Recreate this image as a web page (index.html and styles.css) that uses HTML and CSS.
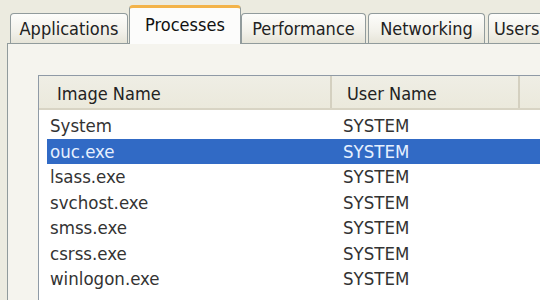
FILE: index.html
```html
<!DOCTYPE html>
<html lang="en">
  <head>
    <meta charset="UTF-8" />
    <title>Windows Task Manager</title>
    <link rel="stylesheet" href="styles.css">
  </head>
  <body>
    <div class="tabs">
      <div class="tab tab-apps">Applications</div>
      <div class="tab tab-proc active">Processes</div>
      <div class="tab tab-perf">Performance</div>
      <div class="tab tab-net">Networking</div>
      <div class="tab tab-users">Users</div>
    </div>
    <div class="panel">
      <div class="list">
        <div class="header">
          <div class="col col-name">Image Name</div>
          <div class="col col-user">User Name</div>
          <div class="col col-rest"></div>
        </div>
        <div class="rows">
          <div class="row"><span class="name">System</span><span class="user">SYSTEM</span></div>
          <div class="row selected"><span class="name">ouc.exe</span><span class="user">SYSTEM</span></div>
          <div class="row"><span class="name">lsass.exe</span><span class="user">SYSTEM</span></div>
          <div class="row"><span class="name">svchost.exe</span><span class="user">SYSTEM</span></div>
          <div class="row"><span class="name">smss.exe</span><span class="user">SYSTEM</span></div>
          <div class="row"><span class="name">csrss.exe</span><span class="user">SYSTEM</span></div>
          <div class="row"><span class="name">winlogon.exe</span><span class="user">SYSTEM</span></div>
        </div>
      </div>
    </div>
  </body>
</html>
```
FILE: styles.css
```css
/* Task Manager, XP style */
:root {
  --face: #ecebe0;
  --tab-border: #919b9c;
  --select: #316ac5;
}

body {
  margin: 0;
  width: 540px;
  height: 300px;
  overflow: hidden;
  background-color: var(--face);
  font-family: "DejaVu Sans Condensed", "DejaVu Sans", sans-serif;
  font-size: 18px;
  color: #222;
}

/* Tabs */
.tabs {
  display: flex;
  align-items: flex-end;
  height: 43px;
  padding-left: 10px;
  white-space: nowrap;
}

.tab {
  flex: none;
  height: 30px;
  line-height: 30px;
  margin-right: 2px;
  text-align: center;
  border: 1px solid var(--tab-border);
  border-bottom: none;
  border-radius: 4px 4px 0 0;
  background: linear-gradient(#fdfdfb, #f2f1ea 60%, #e6e4d8);
  box-sizing: border-box;
}

.tab-apps { width: 118px; margin-right: 1px; }
.tab-proc { width: 112px; margin-right: 0; }
.tab-perf { width: 125px; }
.tab-net { width: 117px; margin-right: 3px; }
.tab-users { width: 60px; text-align: left; padding-left: 5px; }

.tab.active {
  height: 39px;
  line-height: 34px;
  margin-bottom: -1px;
  position: relative;
  border-top: 3px solid #f3b34a;
  background: #fcfcfb;
  color: #111;
}

/* Page panel */
.panel {
  margin-left: 7px;
  height: 257px;
  padding: 31px 0 0 30px;
  border: 1px solid var(--tab-border);
  border-right: none;
  border-bottom: none;
  background-color: #f5f4ee;
  box-sizing: border-box;
}

.list {
  height: 225px;
  border: 1px solid #8f9aa6;
  border-right: none;
  border-bottom: none;
  background-color: #fff;
}

.header {
  display: flex;
  height: 34px;
  background: linear-gradient(#efeee5, #ebe9dc);
  border-bottom: 2px solid #d8d4c4;
  box-sizing: border-box;
}

.col {
  line-height: 36px;
  padding-left: 18px;
  box-sizing: border-box;
  border-right: 2px solid #d4d0c0;
}

.col-name {
  width: 293px;
}

.col-user {
  width: 188px;
  padding-left: 15px;
}

.col-rest {
  flex: 1;
  border-right: none;
}

.rows {
  padding: 3px 0 0 8px;
  font-size: 18.5px;
}

.row {
  display: flex;
  height: 25.5px;
  line-height: 25.5px;
  color: #333;
}

.row .name {
  width: 293px;
  padding-left: 3px;
}

.row.selected {
  background-color: var(--select);
  color: #e6f0ff;
}
```
